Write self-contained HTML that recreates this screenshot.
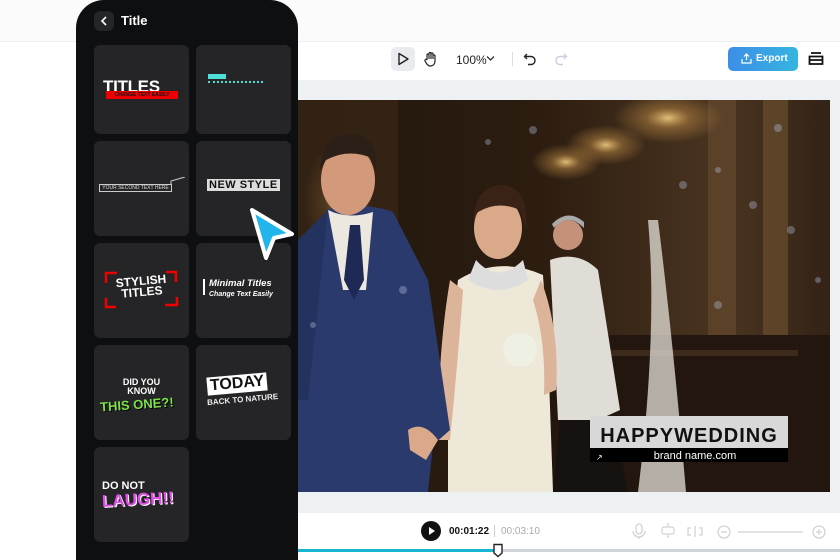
<!DOCTYPE html>
<html><head><meta charset="utf-8"><style>
*{margin:0;padding:0;box-sizing:border-box}
body{width:840px;height:560px;overflow:hidden;background:#fff;font-family:"Liberation Sans",sans-serif;position:relative}
.abs{position:absolute}
.card{position:absolute;width:95px;background:#252527;border-radius:6px;overflow:hidden}
</style></head><body>
<div class="abs" style="left:0;top:0;width:840px;height:42px;background:#fbfbfc;border-bottom:1px solid #eceef1"></div>
<div class="abs" style="left:280px;top:42px;width:560px;height:38px;background:#fff"></div>
<div class="abs" style="left:280px;top:80px;width:560px;height:433px;background:#eef1f4"></div>
<!-- toolbar -->
<div class="abs" style="left:391px;top:47px;width:24px;height:24px;background:#e9ebee;border-radius:5px"></div>
<svg class="abs" style="left:396px;top:52px" width="14" height="14" viewBox="0 0 14 14"><path d="M3 1.5 L12 7 L3 12.5 Z" fill="none" stroke="#222" stroke-width="1.4" stroke-linejoin="round"/></svg>
<svg class="abs" style="left:423px;top:51px" width="15" height="16" viewBox="0 0 15 16"><path d="M4 9 V4 a1 1 0 0 1 2 0 V8 V2.5 a1 1 0 0 1 2 0 V8 V3 a1 1 0 0 1 2 0 V8 V5 a1 1 0 0 1 2 0 V10 c0 3-2 5-4.5 5 c-2 0-3-1-4-2.5 L2 10 a1 1 0 0 1 2-1z" fill="none" stroke="#222" stroke-width="1.2"/></svg>
<div class="abs" style="left:456px;top:53px;font-size:12px;color:#222">100%</div>
<svg class="abs" style="left:486px;top:55px" width="9" height="7"><path d="M1 1.5 L4.5 5 L8 1.5" fill="none" stroke="#333" stroke-width="1.3"/></svg>
<div class="abs" style="left:512px;top:52px;width:1px;height:14px;background:#ddd"></div>
<svg class="abs" style="left:523px;top:52px" width="14" height="14"><path d="M4 2 L1.5 4.5 L4 7 M1.5 4.5 H8 a4 4 0 0 1 0 8 H5" fill="none" stroke="#222" stroke-width="1.4"/></svg>
<svg class="abs" style="left:554px;top:52px" width="14" height="14"><path d="M10 2 L12.5 4.5 L10 7 M12.5 4.5 H6 a4 4 0 0 0 0 8 H9" fill="none" stroke="#ccd" stroke-width="1.4"/></svg>
<div class="abs" style="left:728px;top:47px;width:70px;height:24px;border-radius:5px;background:linear-gradient(90deg,#3d8ee6,#35b5e0);color:#fff;font-size:10px;font-weight:bold;line-height:24px;padding-left:28px">Export</div>
<svg class="abs" style="left:741px;top:53px" width="11" height="11"><path d="M5.5 7 V1 M3 3.5 L5.5 1 L8 3.5 M1 6 V10 H10 V6" fill="none" stroke="#fff" stroke-width="1.2"/></svg>
<svg class="abs" style="left:808px;top:51px" width="16" height="16"><path d="M3 2 H13 M1.5 5.5 H14.5 V13 H1.5 Z M1.5 9 H14.5" fill="none" stroke="#111" stroke-width="1.8"/></svg>
<!-- photo -->
<svg class="abs" style="left:298px;top:100px" width="532" height="392" viewBox="0 0 532 392">
<defs>
<linearGradient id="bg" x1="0" x2="1"><stop offset="0" stop-color="#21160d"/><stop offset=".45" stop-color="#2c1d10"/><stop offset=".8" stop-color="#4a3420"/><stop offset="1" stop-color="#332316"/></linearGradient>
<radialGradient id="glow" cx=".5" cy=".5" r=".5"><stop offset="0" stop-color="#ffd98a" stop-opacity=".85"/><stop offset=".4" stop-color="#d9a050" stop-opacity=".4"/><stop offset="1" stop-color="#d9a050" stop-opacity="0"/></radialGradient>
</defs>
<rect width="532" height="392" fill="url(#bg)"/>
<rect x="410" y="0" width="28" height="260" fill="#6b5030" opacity=".5"/>
<rect x="465" y="0" width="25" height="260" fill="#7a5c35" opacity=".5"/>
<rect x="0" y="0" width="100" height="230" fill="#3a2818" opacity=".7"/>
<rect x="250" y="235" width="282" height="157" fill="#22160e"/>
<rect x="260" y="250" width="240" height="6" fill="#3e2a1a"/>
<ellipse cx="370" cy="18" rx="55" ry="25" fill="url(#glow)"/>
<ellipse cx="308" cy="45" rx="40" ry="20" fill="url(#glow)"/>
<ellipse cx="268" cy="62" rx="35" ry="18" fill="url(#glow)"/>
<ellipse cx="40" cy="100" rx="35" ry="55" fill="url(#glow)" opacity=".4"/>
<!-- priest -->
<path d="M252 160 Q280 150 300 170 L322 310 L300 320 L260 320 Z" fill="#e0ddd6"/>
<path d="M262 320 H315 L330 392 H255 Z" fill="#161210"/>
<circle cx="270" cy="135" r="15" fill="#c4917a"/>
<path d="M256 128 Q270 112 286 128 L286 122 Q270 108 254 124Z" fill="#aaa"/>
<!-- bride -->
<path d="M350 120 Q360 230 340 392 L388 392 Q375 240 360 120Z" fill="#e6e2da" opacity=".75"/>
<path d="M160 180 Q200 155 245 175 L250 250 L255 392 H150 L150 260 Z" fill="#eee8d9"/>
<path d="M152 180 Q140 250 140 340 L152 340 Q160 260 165 190Z" fill="#dcb49a"/>
<path d="M243 180 Q262 230 258 290 L246 295 Q248 240 235 200Z" fill="#dcb49a"/>
<path d="M178 160 Q200 185 225 160 L230 180 Q200 200 170 180Z" fill="#ddd"/>
<ellipse cx="200" cy="128" rx="24" ry="31" fill="#d9a98a"/>
<path d="M175 120 Q178 85 205 85 Q232 88 228 130 L222 110 Q200 100 180 112Z" fill="#3b2216"/>
<circle cx="222" cy="250" r="17" fill="#eef0e4"/>
<!-- groom -->
<path d="M0 230 L28 110 Q60 100 95 112 L130 180 L152 330 L135 345 L130 392 H0 Z" fill="#2b3a6c"/>
<path d="M30 110 Q50 120 75 112 L68 190 L45 190Z" fill="#ece8e0"/>
<path d="M52 125 L62 125 L66 180 L56 200 L46 180Z" fill="#1e2a55"/>
<path d="M0 140 L30 110 L10 300 L0 300Z" fill="#23325e"/>
<ellipse cx="50" cy="80" rx="27" ry="35" fill="#d29a7b"/>
<path d="M22 70 Q25 32 55 34 Q82 38 78 72 L74 58 Q50 48 28 60Z" fill="#2b1f18"/>
<path d="M110 330 Q125 320 140 340 L128 360 L112 350Z" fill="#d9a98a"/>
<g fill="#b8c8e8" opacity=".35"><circle cx="235" cy="30" r="4"/><circle cx="385" cy="85" r="4"/><circle cx="420" cy="70" r="3"/><circle cx="455" cy="105" r="4"/><circle cx="480" cy="28" r="4"/><circle cx="493" cy="130" r="4"/><circle cx="190" cy="42" r="3"/><circle cx="520" cy="180" r="3"/><circle cx="105" cy="190" r="4"/><circle cx="420" cy="205" r="4"/><circle cx="15" cy="225" r="3"/><circle cx="320" cy="350" r="3"/></g>
<rect x="292" y="316" width="198" height="32" fill="#d8d8d8"/>
<rect x="292" y="348" width="198" height="14" fill="#000"/>
<text x="391" y="342" text-anchor="middle" font-family="Liberation Sans" font-weight="bold" font-size="20" fill="#111" letter-spacing="1">HAPPYWEDDING</text>
<text x="397" y="359" text-anchor="middle" font-family="Liberation Sans" font-size="11" fill="#fff">brand name.com</text>
<text x="298" y="360" font-family="Liberation Sans" font-size="8" fill="#fff">↗</text>
</svg>
<!-- bottom bar -->
<div class="abs" style="left:280px;top:513px;width:560px;height:47px;background:#fff"></div>
<div class="abs" style="left:421px;top:521px;width:20px;height:20px;border-radius:50%;background:#111"></div>
<svg class="abs" style="left:428px;top:527px" width="8" height="8"><path d="M1 0 L7 4 L1 8Z" fill="#fff"/></svg>
<div class="abs" style="left:449px;top:526px;font-size:10px;font-weight:bold;color:#111">00:01:22</div>
<div class="abs" style="left:494px;top:525px;width:1px;height:12px;background:#ccc"></div>
<div class="abs" style="left:501px;top:526px;font-size:10px;color:#aaa">00:03:10</div>
<svg class="abs" style="left:630px;top:522px" width="210" height="18" fill="none" stroke="#cfd3d8" stroke-width="1.3">
<rect x="6" y="2" width="6" height="10" rx="3"/><path d="M3 9 a6 6 0 0 0 12 0 M9 15 V17"/>
<rect x="32" y="5" width="12" height="7" rx="2"/><path d="M38 1 V4 M38 13 V16"/>
<path d="M65 4 V15 M61 6 H58 V13 H61 M69 6 H72 V13 H69"/>
<circle cx="94" cy="10" r="6"/><path d="M91 10 H97"/>
<path d="M108 10 H173"/>
<circle cx="189" cy="10" r="6"/><path d="M186 10 H192 M189 7 V13"/>
</svg>
<div class="abs" style="left:298px;top:549px;width:200px;height:3px;background:#17b5d2"></div>
<div class="abs" style="left:498px;top:549px;width:342px;height:3px;background:#d0d4da"></div>
<svg class="abs" style="left:492px;top:543px" width="12" height="15"><path d="M2 1.5 H10 V10 L6 13.5 L2 10Z" fill="#fff" stroke="#222" stroke-width="1.4"/></svg>
<!-- phone panel -->
<div class="abs" style="left:76px;top:0;width:222px;height:560px;background:#0e0f11;border-radius:28px 28px 0 0"></div>
<div class="abs" style="left:94px;top:11px;width:20px;height:20px;background:#25262a;border-radius:6px"></div>
<svg class="abs" style="left:100px;top:16px" width="8" height="10"><path d="M6 1 L2 5 L6 9" fill="none" stroke="#fff" stroke-width="1.6"/></svg>
<div class="abs" style="left:121px;top:13px;font-size:13px;font-weight:bold;color:#fff">Title</div>
<div class="abs" style="left:76px;top:44px;width:222px;height:516px;overflow:hidden">
<div class="card" style="left:18px;top:1px;height:89px"><div class="abs" style="left:9px;top:33px;font:900 17px/17px 'Liberation Sans';color:#fff;letter-spacing:-0.3px">TITLES</div><div class="abs" style="left:12px;top:46px;width:72px;height:8px;background:#e00;font:bold 5px 'Liberation Sans';color:#111;text-align:center;line-height:8px">CHANGE TEXT EASILY</div></div>
<div class="card" style="left:120px;top:1px;height:89px"><div class="abs" style="left:12px;top:29px;width:18px;height:5px;background:#4ee0d8"></div><div class="abs" style="left:12px;top:36px;width:55px;height:2px;border-top:2px dotted #4ee0d8"></div></div>
<div class="card" style="left:18px;top:97px;height:95px"><div class="abs" style="left:5px;top:43px;width:73px;height:8px;border:1px solid #ccc;font:5px 'Liberation Sans';color:#ddd;text-align:center;line-height:6px">YOUR SECOND TEXT HERE</div><svg class="abs" style="left:76px;top:36px" width="16" height="10"><path d="M1 8 V4 L15 0" stroke="#ccc" fill="none"/></svg></div>
<div class="card" style="left:120px;top:97px;height:95px"><div class="abs" style="left:11px;top:38px;background:#ddd;font:bold 11px 'Liberation Sans';color:#111;padding:0 2px;letter-spacing:.5px">NEW STYLE</div></div>
<div class="card" style="left:18px;top:199px;height:95px"><svg class="abs" style="left:10px;top:27px" width="76" height="40"><path d="M2 13 V3 H13 M62 2 H72 V12 M73 27 V35 H61 M12 37 H2 V28" stroke="#e00" stroke-width="2.5" fill="none"/></svg><div class="abs" style="left:0;width:95px;top:33px;font:bold 12px 'Liberation Sans';color:#fff;text-align:center;line-height:11px;transform:rotate(-5deg)">STYLISH<br>TITLES</div></div>
<div class="card" style="left:120px;top:199px;height:95px"><div class="abs" style="left:7px;top:36px;width:2px;height:16px;background:#fff"></div><div class="abs" style="left:13px;top:36px;font:italic bold 9.5px 'Liberation Sans';color:#fff;line-height:10px">Minimal Titles<br><span style="font-size:7px">Change Text Easily</span></div></div>
<div class="card" style="left:18px;top:301px;height:95px"><div class="abs" style="left:0;width:95px;top:33px;font:900 9px 'Liberation Sans';color:#fff;text-align:center;line-height:9px">DID YOU<br>KNOW</div><div class="abs" style="left:6px;top:52px;font:900 13px 'Liberation Sans';color:#7be04a;transform:rotate(-4deg);text-shadow:1px 1px 0 #000">THIS ONE?!</div></div>
<div class="card" style="left:120px;top:301px;height:95px"><div class="abs" style="left:11px;top:30px;background:#fff;font:900 16px 'Liberation Sans';color:#111;padding:0 3px;transform:rotate(-5deg)">TODAY</div><div class="abs" style="left:11px;top:50px;font:bold 8px 'Liberation Sans';color:#eee;transform:rotate(-5deg)">BACK TO NATURE</div></div>
<div class="card" style="left:18px;top:403px;height:95px"><div class="abs" style="left:8px;top:33px;font:900 11px 'Liberation Sans';color:#fff">DO NOT</div><div class="abs" style="left:8px;top:43px;font:900 17px 'Liberation Sans';color:#e04ee8;transform:rotate(-3deg);text-shadow:1px 1px 0 #fff">LAUGH!!</div></div>
</div>
<!-- cursor -->
<svg class="abs" style="left:246px;top:206px" width="52" height="58" viewBox="0 0 52 58"><path d="M6 4 L46 28 L28 32 L20 52 Z" fill="#22b5ec" stroke="#fff" stroke-width="4" stroke-linejoin="round"/></svg>
</body></html>
